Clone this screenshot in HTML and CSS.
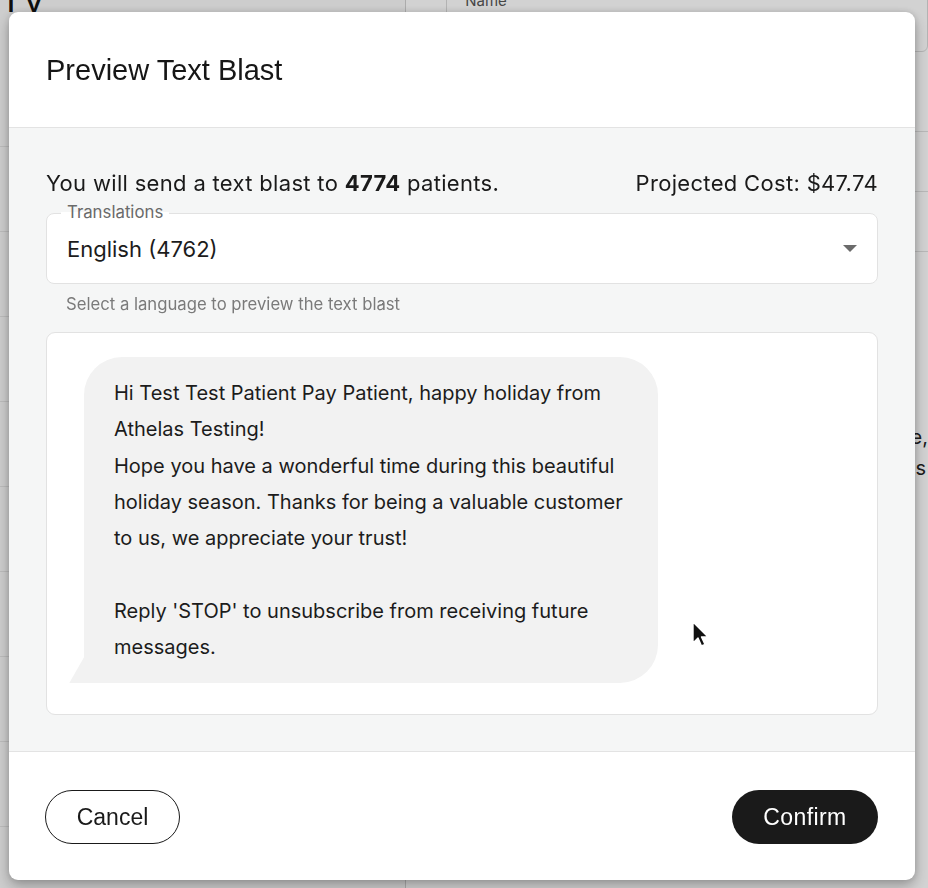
FILE: index.html
```html
<!DOCTYPE html>
<html lang="en">
<head>
<meta charset="utf-8">
<title>Preview Text Blast</title>
<link rel="stylesheet" href="styles.css">
</head>
<body>
<div class="page">
  <div class="page-left">
    <h1 class="page-title">TV</h1>
    <div class="page-rows">
      <div class="page-row"></div><div class="page-row"></div><div class="page-row"></div>
      <div class="page-row"></div><div class="page-row"></div><div class="page-row"></div>
      <div class="page-row"></div><div class="page-row"></div><div class="page-row"></div>
      <div class="page-row"></div>
    </div>
  </div>
  <div class="page-right">
    <div class="page-field"><span class="page-field-label">Name</span></div>
    <div class="page-lines">
      <div class="page-line"></div><div class="page-line"></div><div class="page-line"></div>
    </div>
    <p class="page-text">the,<br>this</p>
  </div>
</div>
<div class="backdrop"></div>

<div class="modal" role="dialog" aria-labelledby="modal-title">
  <header class="modal-header">
    <h2 id="modal-title" class="modal-title">Preview Text Blast</h2>
  </header>
  <section class="modal-body">
    <div class="summary">
      <span>You will send a text blast to <strong>4774</strong> patients.</span>
      <span>Projected Cost: $47.74</span>
    </div>
    <div class="select">
      <span class="select-label">Translations</span>
      <span class="select-value">English (4762)</span>
      <svg class="select-arrow" width="14" height="7" viewBox="0 0 14 7"><path d="M0 0h14L7 7z" fill="#6b6b6b"/></svg>
    </div>
    <p class="helper">Select a language to preview the text blast</p>
    <div class="preview">
      <div class="bubble">
        Hi Test Test Patient Pay Patient, happy holiday from<br>
        Athelas Testing!<br>
        Hope you have a wonderful time during this beautiful<br>
        holiday season. Thanks for being a valuable customer<br>
        to us, we appreciate your trust!<br>
        <br>
        Reply 'STOP' to unsubscribe from receiving future<br>
        messages.
      </div>
    </div>
  </section>
  <footer class="modal-footer">
    <button class="btn btn-outline" type="button">Cancel</button>
    <button class="btn btn-dark" type="button">Confirm</button>
  </footer>
</div>

<svg class="cursor" width="18" height="28" viewBox="0 0 18 28">
  <path d="M1 1 L1 22 L6 17 L9.5 25 L13 23.5 L9.5 16 L16 16 Z" fill="#111" stroke="#fff" stroke-width="1.4" stroke-linejoin="round"/>
</svg>
</body>
</html>
```

FILE: styles.css
```css
* { box-sizing: border-box; }

html, body {
  margin: 0;
  padding: 0;
  width: 928px;
  height: 888px;
  overflow: hidden;
}

body {
  font-family: Inter, "Liberation Sans", sans-serif;
  color: #1c1c1c;
  background: #ffffff;
}

/* underlying page (dimmed) */
.page {
  display: flex;
  height: 888px;
}
.page-left {
  width: 415px;
  border-right: 1px solid #cfcfcf;
  background: #f7f7f7;
}
.page-title {
  margin: -20px 0 0 0;
  font-family: "Liberation Sans", sans-serif;
  font-weight: 400;
  font-size: 36px;
  line-height: 40px;
  color: #111;
}
.page-rows {
  margin-top: 42px;
}
.page-row {
  height: 85px;
  border-bottom: 1px solid #e2e2e2;
}
.page-right {
  flex: 1;
  padding: 0 0 0 40px;
  background: #fdfdfd;
}
.page-field {
  margin-top: -8px;
  height: 60px;
  border: 1px solid #d8d8d8;
  border-radius: 6px;
  position: relative;
}
.page-field-label {
  position: absolute;
  top: -2px;
  left: 14px;
  padding: 0 4px;
  font-size: 15px;
  color: #555;
  background: #fdfdfd;
}
.page-lines { margin-top: 20px; }
.page-line {
  height: 60px;
  border-bottom: 1px solid #dedede;
}
.page-text {
  margin: 170px 0 0 446px;
  font-size: 20px;
  line-height: 31px;
  color: #222;
}

.backdrop {
  position: fixed;
  inset: 0;
  background: rgba(0, 0, 0, 0.17);
}

/* modal */
.modal {
  position: fixed;
  left: 9px;
  top: 12px;
  width: 906px;
  height: 868px;
  display: flex;
  flex-direction: column;
  background: #ffffff;
  border-radius: 9px;
  overflow: hidden;
  box-shadow: 0 6px 14px rgba(0, 0, 0, 0.28), 0 0 6px rgba(0, 0, 0, 0.12);
}

.modal-header {
  height: 116px;
  flex: none;
  display: flex;
  align-items: center;
  padding: 0 37px;
  border-bottom: 1px solid #e3e3e3;
}
.modal-title {
  margin: 0;
  padding-top: 2px;
  font-family: "Liberation Sans", sans-serif;
  font-weight: 400;
  font-size: 29px;
  color: #161616;
}

.modal-body {
  flex: 1;
  background: #f5f6f6;
  padding: 41px 37px 36px 37px;
  border-bottom: 1px solid #e3e3e3;
}

.summary {
  display: flex;
  justify-content: space-between;
  font-size: 22px;
  line-height: 28px;
  letter-spacing: 0.32px;
  color: #1a1a1a;
}
.summary strong { font-weight: 700; }

.select {
  position: relative;
  margin-top: 16px;
  height: 71px;
  display: flex;
  align-items: center;
  padding: 0 20px;
  background: #ffffff;
  border: 1px solid #e2e2e2;
  border-radius: 8px;
}
.select-label {
  position: absolute;
  top: -12px;
  left: 14px;
  padding: 0 6px;
  font-size: 16.8px;
  line-height: 20px;
  color: #6a6a6a;
  background: linear-gradient(to bottom, #f5f6f6 0, #f5f6f6 50%, #ffffff 50%);
}
.select-value {
  flex: 1;
  font-size: 22px;
  color: #1c1c1c;
}

.helper {
  margin: 9px 0 0 20px;
  font-size: 16.7px;
  line-height: 22px;
  color: #7a7a7a;
}

.preview {
  margin-top: 17px;
  height: 383px;
  padding: 24px 37px 0 37px;
  background: #ffffff;
  border: 1px solid #e2e2e2;
  border-radius: 9px;
}

.bubble {
  position: relative;
  width: 574px;
  padding: 18px 10px 18px 30px;
  background: #f2f2f2;
  border-radius: 38px 38px 38px 0;
  font-size: 20px;
  line-height: 36.3px;
  color: #1c1c1c;
}
.bubble::before {
  content: "";
  position: absolute;
  left: -15px;
  bottom: 0;
  width: 16px;
  height: 28px;
  background: #f2f2f2;
  clip-path: polygon(100% 0, 100% 100%, 0 100%);
}

.modal-footer {
  flex: none;
  height: 128px;
  display: flex;
  align-items: center;
  justify-content: space-between;
  padding: 2px 37px 0 36px;
}

.btn {
  height: 54px;
  border-radius: 27px;
  font-family: "Liberation Sans", sans-serif;
  font-size: 23px;
  cursor: pointer;
}
.btn-outline {
  width: 135px;
  background: #ffffff;
  color: #1a1a1a;
  border: 1.5px solid #1a1a1a;
}
.btn-dark {
  width: 146px;
  background: #1a1a1a;
  color: #ffffff;
  border: none;
  letter-spacing: 0.4px;
}

.cursor {
  position: fixed;
  left: 692px;
  top: 621px;
}
```
